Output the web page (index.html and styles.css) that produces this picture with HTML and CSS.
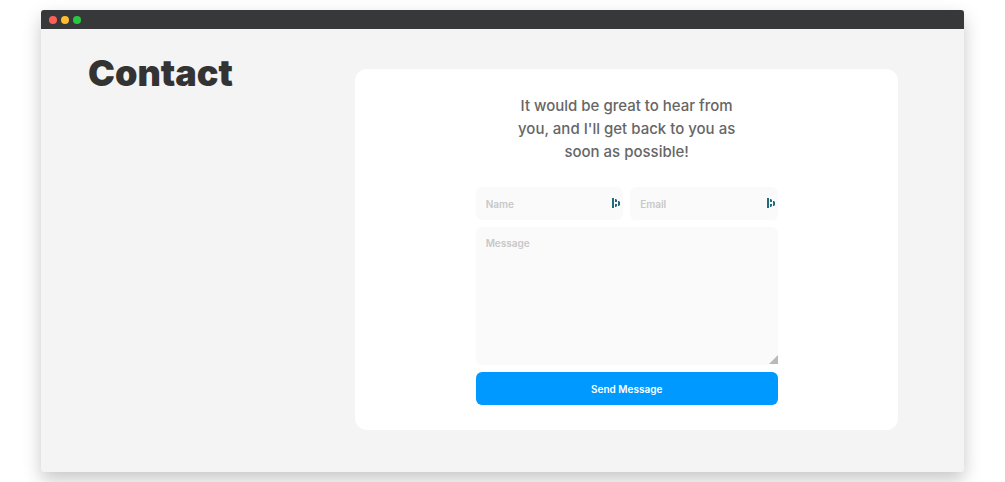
FILE: index.html
```
<!DOCTYPE html>
<html lang="en">
<head>
  <meta charset="utf-8">
  <title>Contact</title>
  <link rel="stylesheet" href="styles.css">
</head>
<body>
  <div class="window">
    <div class="titlebar">
      <span class="dot red"></span>
      <span class="dot yellow"></span>
      <span class="dot green"></span>
    </div>
    <main class="contact">
      <h1>Contact</h1>
      <section class="card">
        <p class="intro">It would be great to hear from you, and I'll get back to you as soon as possible!</p>
        <form class="contact-form">
          <div class="field">
            <input type="text" name="name" placeholder="Name" aria-label="Name">
            <svg class="autofill" viewBox="0 0 8 10" aria-hidden="true">
              <path d="M0 0h2v10H0zM3 1h1l1 1v2H3zM3 6h2v2l-1 1H3zM6 3h1l1 1v3L7 8H6z"/>
            </svg>
          </div>
          <div class="field">
            <input type="email" name="email" placeholder="Email" aria-label="Email">
            <svg class="autofill" viewBox="0 0 8 10" aria-hidden="true">
              <path d="M0 0h2v10H0zM3 1h1l1 1v2H3zM3 6h2v2l-1 1H3zM6 3h1l1 1v3L7 8H6z"/>
            </svg>
          </div>
          <div class="field message">
            <textarea name="message" placeholder="Message" aria-label="Message"></textarea>
            <svg class="grip" viewBox="0 0 9 9" aria-hidden="true">
              <path d="M9 0v9H0z"/>
            </svg>
          </div>
          <button type="submit">Send Message</button>
        </form>
      </section>
    </main>
  </div>
</body>
</html>
```

FILE: styles.css
```
* {
  box-sizing: border-box;
}

body {
  margin: 0;
  padding: 10px 41px;
  background-color: #fff;
  font-family: Inter, "Liberation Sans", sans-serif;
  overflow: hidden;
}

.window {
  background-color: #f4f4f4;
  border-radius: 3px;
  box-shadow: 0 8px 18px rgba(0, 0, 0, 0.22);
}

.titlebar {
  display: flex;
  align-items: center;
  gap: 4px;
  height: 19px;
  padding: 1px 8px 0;
  background-color: #363839;
  border-radius: 3px 3px 0 0;
}

.dot {
  width: 8px;
  height: 8px;
  border-radius: 50%;
}

.red {
  background-color: #ff5f57;
}

.yellow {
  background-color: #febc2e;
}

.green {
  background-color: #28c840;
}

.contact {
  display: flex;
  align-items: flex-start;
  padding: 40px 66px 42px 47px;
}

h1 {
  width: 33%;
  margin: -20px 0 0;
  color: #333;
  font-size: 36px;
  font-weight: 900;
  line-height: 48px;
}

.card {
  width: 67%;
  padding: 25px 40px;
  background-color: #fff;
  border-radius: 12px;
}

.intro {
  max-width: 240px;
  margin: 0 auto 24px;
  color: #666;
  font-size: 15px;
  font-weight: 500;
  line-height: 23px;
  text-align: center;
}

.contact-form {
  display: grid;
  grid-template-columns: 1fr 1fr;
  gap: 7px;
  max-width: 302px;
  margin: 0 auto;
}

.field {
  position: relative;
}

.message,
button {
  grid-column: 1 / -1;
}

input,
textarea {
  display: block;
  width: 100%;
  height: 33px;
  padding: 0 10px;
  border: none;
  border-radius: 6px;
  background-color: #fafafa;
  color: #333;
  font-family: inherit;
  font-size: 10px;
  font-weight: 600;
}

textarea {
  height: 138px;
  padding: 10px;
  resize: none;
}

::placeholder {
  color: #c8c8c8;
}

.autofill {
  position: absolute;
  top: 11px;
  right: 3px;
  width: 8px;
  height: 10px;
  fill: #1f6b7d;
}

.grip {
  position: absolute;
  right: 0;
  bottom: 1px;
  width: 9px;
  height: 9px;
  fill: #b9b9b9;
}

button {
  height: 33px;
  border: none;
  border-radius: 6px;
  background-color: #0099ff;
  color: #fff;
  font-family: inherit;
  font-size: 10px;
  font-weight: 600;
  cursor: pointer;
}
```
